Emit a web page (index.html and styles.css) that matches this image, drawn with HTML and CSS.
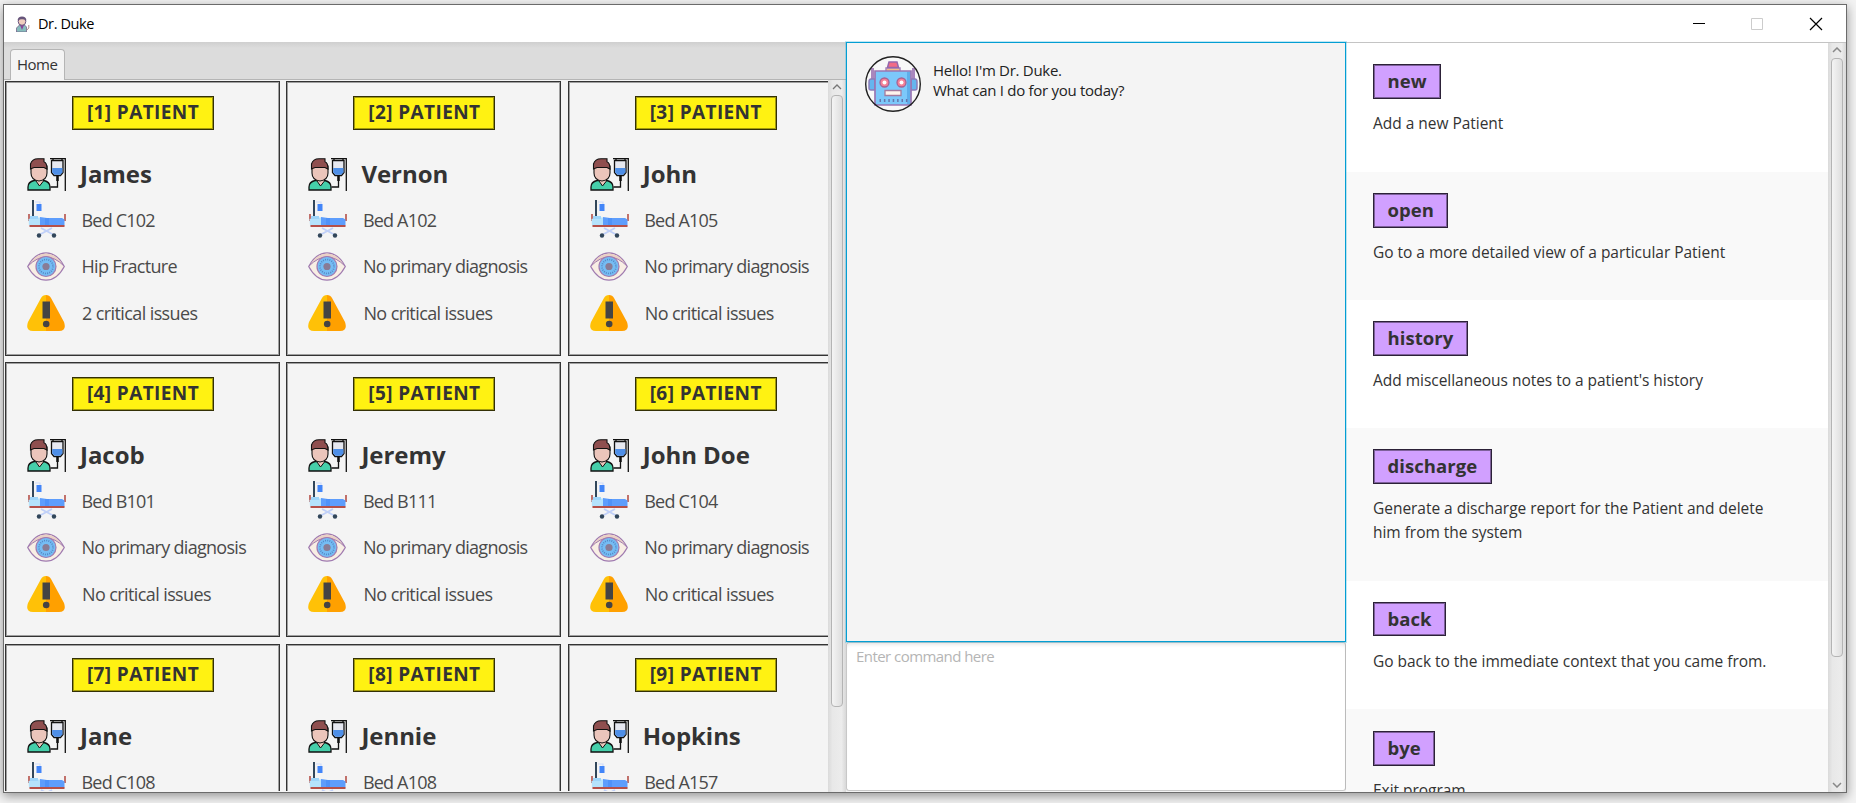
FILE: index.html
```
<!DOCTYPE html>
<html lang="en">
<head>
<meta charset="utf-8">
<title>Dr. Duke</title>
<link rel="stylesheet" href="styles.css">
</head>
<body>
<svg class="defs" width="0" height="0">
  <symbol id="patient" viewBox="0 0 39 33">
    <path d="M1 32v-3q0-5 6-6.500h10q6 1.500 6 6.500v3z" fill="#45cfaa" stroke="#111" stroke-width="1.300"/>
    <path d="M9 20v3l3.500 5 4-5v-3z" fill="#ebc5bb" stroke="#111" stroke-width="1"/>
    <path d="M4 8h16v7q0 7-8 8-8-1-8-8z" fill="#ebc5bb" stroke="#111" stroke-width="1.100"/>
    <path d="M3.500 11V6Q5 .7 11 .7h6v3q3 1 3 7.300l-3-1.500H7z" fill="#8f4f4f" stroke="#111" stroke-width="1.100"/>
    <path d="M23 .7h15.300V33M26 .7v2M35 .7v2M30.500 17v12h-7" fill="none" stroke="#111" stroke-width="1.300"/>
    <path d="M24.500 2.500h11.500v12l-2.500 3h-6.500l-2.500-3z" fill="#e6e8f0" stroke="#111" stroke-width="1.300"/>
    <path d="M25.200 10h10.200v4.300l-2.200 2.500h-5.800l-2.200-2.500z" fill="#4e8fe8"/>
    <path d="M30.500 18v5" stroke="#111" stroke-width="2.500"/>
  </symbol>
  <symbol id="bed" viewBox="0 0 38 38">
    <path d="M7 2h5v2" fill="none" stroke="#cfdcfa" stroke-width="1.200"/>
    <path d="M8.500 4h5v7h-5z" fill="#4285f8"/>
    <path d="M5 0v17" stroke="#31465a" stroke-width="2"/>
    <path d="M1 14v7M37 14v7" stroke="#b55049" stroke-width="1.600"/>
    <path d="M.5 19q4-2 12-1.500v8H1z" fill="#b5e2fb"/>
    <path d="M2 16h8v3H2z" fill="#9ed5fa"/>
    <path d="M12 17l7 1h15l2.500 1.500v6H12z" fill="#5d9dfc"/>
    <path d="M18 18v7M20 18v7" stroke="#4387f5"/>
    <path d="M1.500 26h35" stroke="#b55049" stroke-width="2"/>
    <path d="M11 35l13-7M26 35L13 28" stroke="#c0d0f8" stroke-width="1.900"/>
    <circle cx="11" cy="35.500" r="2.200" fill="#31465a"/><circle cx="26" cy="35.500" r="2.200" fill="#31465a"/>
  </symbol>
  <symbol id="eye" viewBox="0 0 38 29">
    <path d="M.7 14.500Q8 .8 19 .8t18.300 13.700Q30 28.200 19 28.200T.7 14.500z" fill="#f8eee4" stroke="#a07bb0" stroke-width="1.200"/>
    <path d="M2 13Q9 1.400 19 1.400T36 13Q27 5 19 5T2 13z" fill="#ead0c6"/>
    <path d="M1 14Q10 5 19 5t18 9" fill="none" stroke="#a07bb0"/>
    <circle cx="19" cy="14.500" r="10" fill="#75bdf4" stroke="#a07bb0" stroke-width="1.200"/>
    <circle cx="19" cy="14.500" r="7" fill="none" stroke="#5686c4" stroke-width="1.700" stroke-dasharray="1 1.200"/>
    <circle cx="19" cy="14.500" r="3.600" fill="#887c96"/>
  </symbol>
  <symbol id="warn" viewBox="0 0 38 36">
    <path d="M19 0Q15.500 0 14 3L1 27Q-2 36 6 36h13z" fill="#ffc107"/>
    <path d="M19 0q3.500 0 5 3l13 24q3 9-5 9H19z" fill="#ffa000"/>
    <path d="M15.500 6.500h7.500v17h-7.500z" fill="#444"/><circle cx="19.200" cy="29" r="3.300" fill="#444"/>
  </symbol>
</svg>
<div class="window">
  <header class="titlebar">
    <svg class="app-icon" viewBox="0 0 14 16"><path d="M.5 16v-4l3-3h5l2 2v5z" fill="#86bcbc" stroke="#6b5580" stroke-width=".7"/><path d="M4 9l2 5 2-5z" fill="#849"/><circle cx="6" cy="5.500" r="3.800" fill="#f1cdbd" stroke="#6b5580"/><path d="M1.500 4.500Q2 .5 6 .5t4.500 4Q6 2 1.500 4.500z" fill="#66547a"/><path d="M12.800 9v3l-2 2" fill="none" stroke="#a88"/></svg>
    <span class="app-name">Dr. Duke</span>
    <svg class="controls" viewBox="0 0 132 14"><path d="M1 6.500h12" stroke="#000"/><path d="M59.500 1.500h11v11h-11z" fill="none" stroke="#ccc"/><path d="M118 1l12 12M130 1l-12 12" stroke="#000" stroke-width="1.200"/></svg>
  </header>
  <main class="content">
    <section class="left">
      <nav class="tabs"><span class="tab"><span class="tab-text">Home</span></span></nav>
      <div class="board">
        <div class="cards">
          <article class="card"><h2 class="tag">[1] PATIENT</h2>
            <div class="row name"><svg><use href="#patient"/></svg><b>James</b></div>
            <div class="row bed"><svg><use href="#bed"/></svg><span>Bed C102</span></div>
            <div class="row diag"><svg><use href="#eye"/></svg><span>Hip Fracture</span></div>
            <div class="row crit"><svg><use href="#warn"/></svg><span>2 critical issues</span></div></article>
          <article class="card"><h2 class="tag">[2] PATIENT</h2>
            <div class="row name"><svg><use href="#patient"/></svg><b>Vernon</b></div>
            <div class="row bed"><svg><use href="#bed"/></svg><span>Bed A102</span></div>
            <div class="row diag"><svg><use href="#eye"/></svg><span>No primary diagnosis</span></div>
            <div class="row crit"><svg><use href="#warn"/></svg><span>No critical issues</span></div></article>
          <article class="card"><h2 class="tag">[3] PATIENT</h2>
            <div class="row name"><svg><use href="#patient"/></svg><b>John</b></div>
            <div class="row bed"><svg><use href="#bed"/></svg><span>Bed A105</span></div>
            <div class="row diag"><svg><use href="#eye"/></svg><span>No primary diagnosis</span></div>
            <div class="row crit"><svg><use href="#warn"/></svg><span>No critical issues</span></div></article>
          <article class="card"><h2 class="tag">[4] PATIENT</h2>
            <div class="row name"><svg><use href="#patient"/></svg><b>Jacob</b></div>
            <div class="row bed"><svg><use href="#bed"/></svg><span>Bed B101</span></div>
            <div class="row diag"><svg><use href="#eye"/></svg><span>No primary diagnosis</span></div>
            <div class="row crit"><svg><use href="#warn"/></svg><span>No critical issues</span></div></article>
          <article class="card"><h2 class="tag">[5] PATIENT</h2>
            <div class="row name"><svg><use href="#patient"/></svg><b>Jeremy</b></div>
            <div class="row bed"><svg><use href="#bed"/></svg><span>Bed B111</span></div>
            <div class="row diag"><svg><use href="#eye"/></svg><span>No primary diagnosis</span></div>
            <div class="row crit"><svg><use href="#warn"/></svg><span>No critical issues</span></div></article>
          <article class="card"><h2 class="tag">[6] PATIENT</h2>
            <div class="row name"><svg><use href="#patient"/></svg><b>John Doe</b></div>
            <div class="row bed"><svg><use href="#bed"/></svg><span>Bed C104</span></div>
            <div class="row diag"><svg><use href="#eye"/></svg><span>No primary diagnosis</span></div>
            <div class="row crit"><svg><use href="#warn"/></svg><span>No critical issues</span></div></article>
          <article class="card"><h2 class="tag">[7] PATIENT</h2>
            <div class="row name"><svg><use href="#patient"/></svg><b>Jane</b></div>
            <div class="row bed"><svg><use href="#bed"/></svg><span>Bed C108</span></div></article>
          <article class="card"><h2 class="tag">[8] PATIENT</h2>
            <div class="row name"><svg><use href="#patient"/></svg><b>Jennie</b></div>
            <div class="row bed"><svg><use href="#bed"/></svg><span>Bed A108</span></div></article>
          <article class="card"><h2 class="tag">[9] PATIENT</h2>
            <div class="row name"><svg><use href="#patient"/></svg><b>Hopkins</b></div>
            <div class="row bed"><svg><use href="#bed"/></svg><span>Bed A157</span></div></article>
        </div>
        <div class="scroll scroll-left">
          <svg class="arrow" viewBox="0 0 10 6"><path d="M1 5l4-4 4 4" fill="none" stroke="#777" stroke-width="1.300"/></svg>
          <div class="thumb"></div>
        </div>
      </div>
    </section>
    <section class="middle">
      <div class="chat">
        <svg class="bot" viewBox="0 0 56 56">
          <circle cx="28" cy="28" r="27.200" fill="#f8f8f8"/>
          <path d="M7.500 24V12M48.500 24V12" stroke="#a987bd" stroke-width="3"/>
          <path d="M21 15v-3h14v3" fill="#f2c08a" stroke="#a987bd" stroke-width="1.500"/>
          <path d="M22.500 11.500l1.500-5.500h8l1.500 5.500z" fill="#f26c86" stroke="#9468ad" stroke-width="1.500"/>
          <path d="M10 23H6q-2 0-2 3v6q0 2 2 2h4zM46 23h4q2 0 2 3v6q0 2-2 2h-4z" fill="#65b5ee" stroke="#8b7cb9" stroke-width="1.500"/>
          <path d="M10 15h36v34H10z" fill="#7cc8fa" stroke="#9a76b3" stroke-width="1.700"/>
          <path d="M42 16h3v32h-3z" fill="#5faeea"/>
          <circle cx="19.500" cy="26.500" r="4.500" fill="#f58097" stroke="#a66292" stroke-width="1.300"/><circle cx="36.500" cy="26.500" r="4.500" fill="#f58097" stroke="#a66292" stroke-width="1.300"/>
          <circle cx="19.500" cy="26.500" r="2" fill="#fff"/><circle cx="36.500" cy="26.500" r="2" fill="#fff"/>
          <path d="M20 34.500h16v5H20z" fill="#fff4ed" stroke="#a47a9e" stroke-width="1.300"/>
          <path d="M14.500 44.500h28" stroke="#6675ac" stroke-width="3" stroke-dasharray="1.500 2.900"/>
          <circle cx="28" cy="28" r="27.300" fill="none" stroke="#222" stroke-width="1.400"/>
        </svg>
        <p class="message">Hello! I'm Dr. Duke.<br>What can I do for you today?</p>
      </div>
      <div class="command"><span>Enter command here</span></div>
    </section>
    <section class="help">
      <div class="help-list">
        <div class="item first"><h3>new</h3><p>Add a new Patient</p></div>
        <div class="item second"><h3>open</h3><p>Go to a more detailed view of a particular Patient</p></div>
        <div class="item"><h3>history</h3><p>Add miscellaneous notes to a patient's history</p></div>
        <div class="item tall"><h3>discharge</h3><p>Generate a discharge report for the Patient and delete<br>him from the system</p></div>
        <div class="item"><h3>back</h3><p>Go back to the immediate context that you came from.</p></div>
        <div class="item last"><h3>bye</h3><p>Exit program</p></div>
      </div>
      <div class="scroll scroll-right">
        <svg class="arrow" viewBox="0 0 10 6"><path d="M1 5l4-4 4 4" fill="none" stroke="#888" stroke-width="1.500"/></svg>
        <div class="thumb"></div>
        <svg class="arrow down" viewBox="0 0 10 6"><path d="M1 1l4 4 4-4" fill="none" stroke="#888" stroke-width="1.500"/></svg>
      </div>
    </section>
  </main>
</div>
</body>
</html>
```
FILE: styles.css
```
* { box-sizing: border-box; }
body {
  margin: 0;
  height: 803px;
  overflow: hidden;
  padding: 4px 9px 10px 3px;
  background: #f3f3f3;
  font-family: "Open Sans", "Noto Sans", sans-serif;
  color: #333;
}
h2, h3, p { margin: 0; }
.defs { position: absolute; }
.window {
  height: 789px;
  border: 1px solid #6b6b6b;
  background: #f4f4f4;
  box-shadow: 0 3px 10px rgba(0, 0, 0, .4);
  display: flex;
  flex-direction: column;
}
.titlebar {
  height: 37px;
  flex: none;
  background: #fff;
  display: flex;
  align-items: center;
  padding: 0 22px 0 12px;
}
.app-icon { width: 14px; height: 16px; }
.app-name { margin-left: 8px; font-size: 14.500px; line-height: 20px; letter-spacing: -.4px; color: #000; white-space: nowrap; }
.controls { width: 132px; height: 14px; margin-left: auto; }
.content { flex: 1; min-height: 0; display: flex; }

.left { width: 842px; flex: none; display: flex; flex-direction: column; }
.tabs {
  height: 38px;
  flex: none;
  background: linear-gradient(#cfcfcf, #dcdcdc 6px);
  border-bottom: 1px solid #b5b5b5;
  padding: 7px 0 0 6px;
}
.tab {
  display: block;
  width: 55px;
  height: 31px;
  border: 1px solid #b5b5b5;
  border-bottom: 0;
  border-radius: 4px 4px 0 0;
  background: #f4f4f4;
  padding: 3px 0 0 6px;
}
.tab-text { display: block; font-size: 15px; line-height: 22px; letter-spacing: -.5px; }
.board { flex: 1; min-height: 0; display: flex; }
.cards {
  width: 824px;
  height: 711px;
  overflow: hidden;
  display: grid;
  grid-template-columns: repeat(3, 275px);
  grid-auto-rows: 275px;
  gap: 6.400px;
  padding: 1px 0 0 1px;
}
.card { border: 1px solid #333; box-shadow: inset 0 0 0 1px #a0a0a0; padding: 13.500px 0 0 21px; }
.tag {
  width: 142px;
  height: 34px;
  margin: 0 0 27.500px 45px;
  border: 1px solid #333005;
  box-shadow: inset 0 0 0 1px rgba(51, 48, 5, .45);
  background: #fff212;
  font-size: 19px;
  letter-spacing: .4px;
  font-weight: 700;
  line-height: 31px;
  text-align: center;
  white-space: nowrap;
}
.row { display: flex; align-items: center; white-space: nowrap; font-size: 18px; color: #4a4a4a; letter-spacing: -.6px; }
.row svg { width: 38px; flex: none; }
.row span { margin-left: 17px; }
.name { height: 34px; }
.name svg { height: 33px; width: 39px; }
.name b { margin: -1px 0 0 14px; font-size: 24px; line-height: 32px; letter-spacing: -.05px; color: #333; }
.bed { height: 50px; padding-top: 7px; letter-spacing: -.8px; }
.bed svg { height: 38px; margin: -2px 0 0 1px; }
.bed span { margin-left: 15.500px; }
.diag { height: 48px; padding-top: 2px; letter-spacing: -.7px; }
.diag svg { height: 29px; }
.diag span { margin-left: 16.500px; }
.crit { height: 48px; }
.crit svg { height: 36px; margin-top: -1px; }

.scroll {
  width: 18px;
  flex: none;
  display: flex;
  flex-direction: column;
  align-items: center;
  background: linear-gradient(90deg, #dadada, #e8e8e8 25%, #ececec 75%, #d8d8d8);
}
.arrow { width: 10px; height: 6px; flex: none; margin-top: 4px; }
.thumb {
  width: 12px;
  margin-top: 5px;
  border: 1px solid #b4b4b4;
  border-radius: 4px;
  background: linear-gradient(90deg, #f4f4f4, #dedede);
}
.scroll-left .thumb { height: 612px; }
.scroll-right .thumb { height: 599px; }
.arrow.down { margin: auto 0 4px; }

.middle { width: 500px; flex: none; display: flex; flex-direction: column; background: #f4f4f4; }
.chat {
  height: 600px;
  flex: none;
  border: 1px solid #039ed3;
  outline: 1px solid rgba(3, 158, 211, .25);
  display: flex;
  padding: 13px 0 0 18px;
  z-index: 1;
}
.bot { width: 56px; height: 56px; }
.message { margin: 4px 0 0 12px; font-size: 15px; line-height: 20px; letter-spacing: -.28px; color: #222; white-space: nowrap; }
.command {
  height: 149px;
  background: #fff;
  border: 1px solid #c8c8c8;
  border-right-color: #bbb;
  border-radius: 3px;
  box-shadow: inset 0 4px 4px -3px #ddd;
  padding: 2px 0 0 9px;
  font-size: 15px;
  line-height: 22px;
  letter-spacing: -.55px;
  color: #b5b5b5;
}

.help { flex: 1; display: flex; border-top: 1px solid #c4c4c4; background: #fff; min-height: 0; }
.help-list { flex: 1; overflow: hidden; }
.item { height: 128.400px; padding: 21px 0 0 27px; background: #fff; }
.item:nth-child(even) { background: #f9f9f9; }
.item.first { height: 129px; }
.item.second { height: 128px; }
.item.tall { height: 152.600px; }
.item.last { padding-top: 22px; }
.item h3 {
  width: max-content;
  height: 34.500px;
  border: 1px solid #2c2138;
  box-shadow: inset 0 0 0 1px rgba(44, 33, 56, .5);
  background: #d1a0ff;
  padding: 0 13.500px;
  font-size: 18.500px;
  letter-spacing: .05px;
  line-height: 32px;
  font-weight: 700;
}
.item p { margin-top: 12.500px; font-size: 15.500px; line-height: 24px; letter-spacing: -.03px; white-space: nowrap; }
```
